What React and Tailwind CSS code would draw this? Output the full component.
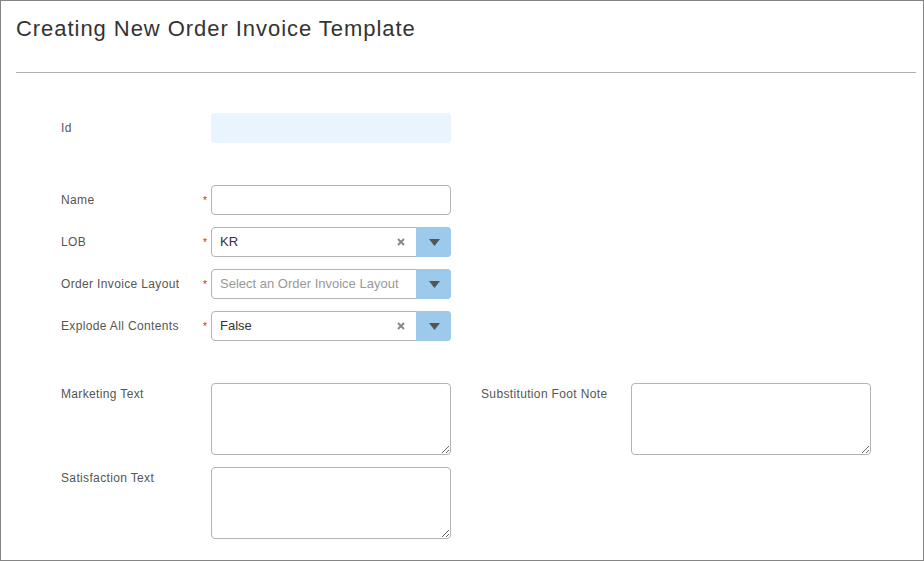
import React from "react";

const Star = () => (
  <span className="w-[10px] pt-[11px] text-[10px] leading-[10px] text-[#e0201b] pr-[4px] text-right">*</span>
);

const labelCls = "pt-[8px] text-[12px] leading-[14px] tracking-[0.35px] text-[#555]";

const SelectBox = ({ value, placeholder }) => (
  <div className="flex w-[240px] h-[30px] border border-[#b3b3b3] rounded-[4px] bg-white">
    <div className="flex-1 flex items-center pl-[8px] pr-[6px] text-[13px]">
      {value ? (
        <span className="text-[#333]">{value}</span>
      ) : (
        <span className="text-[#999]">{placeholder}</span>
      )}
      {value && (
        <svg className="ml-auto mr-[5px]" width="8" height="8" viewBox="0 0 8 8">
          <path d="M1 1 L7 7 M7 1 L1 7" stroke="#888" strokeWidth="2" />
        </svg>
      )}
    </div>
    <div className="w-[35px] -my-px -mr-px flex items-center justify-center bg-[#9dc9ea] rounded-r-[4px] border-l border-[#9dc9ea]">
      <svg width="11" height="7" viewBox="0 0 11 7">
        <path d="M0 0 H11 L5.5 7 Z" fill="#555" />
      </svg>
    </div>
  </div>
);

const Row = ({ label, children }) => (
  <div className="flex">
    <div className={`w-[140px] ${labelCls}`}>{label}</div>
    <Star />
    {children}
  </div>
);

const Area = () => (
  <textarea className="w-[240px] h-[72px] border border-[#b3b3b3] rounded-[4px] outline-none block" />
);

export default function App() {
  return (
    <div
      className="w-[924px] h-[561px] border border-[#858585] bg-white overflow-hidden"
      style={{ fontFamily: '"Liberation Sans", Arial, sans-serif' }}
    >
      <div className="ml-[15px] mr-[7px] border-b border-[#b0b0b0] h-[72px] pt-[15px]">
        <h1 className="text-[22px] leading-[26px] tracking-[0.95px] text-[#333]">
          Creating New Order Invoice Template
        </h1>
      </div>

      <div className="pl-[60px] pt-[40px]">
        <div className="flex">
          <div className={`w-[150px] ${labelCls}`}>Id</div>
          <div className="w-[240px] h-[30px] rounded-[4px] bg-[#eaf4fe]" />
        </div>

        <div className="mt-[42px] flex flex-col gap-[12px]">
          <Row label="Name">
            <input className="w-[240px] h-[30px] border border-[#b3b3b3] rounded-[4px] outline-none" />
          </Row>
          <Row label="LOB">
            <SelectBox value="KR" />
          </Row>
          <Row label="Order Invoice Layout">
            <SelectBox placeholder="Select an Order Invoice Layout" />
          </Row>
          <Row label="Explode All Contents">
            <SelectBox value="False" />
          </Row>
        </div>

        <div className="mt-[42px] flex flex-col gap-[12px]">
          <div className="flex">
            <div className="w-[150px] pt-[4px] text-[12px] leading-[14px] tracking-[0.35px] text-[#555]">Marketing Text</div>
            <Area />
            <div className="w-[150px] ml-[30px] pt-[4px] text-[12px] leading-[14px] tracking-[0.35px] text-[#555]">
              Substitution Foot Note
            </div>
            <Area />
          </div>
          <div className="flex">
            <div className="w-[150px] pt-[4px] text-[12px] leading-[14px] tracking-[0.35px] text-[#555]">Satisfaction Text</div>
            <Area />
          </div>
        </div>
      </div>
    </div>
  );
}
